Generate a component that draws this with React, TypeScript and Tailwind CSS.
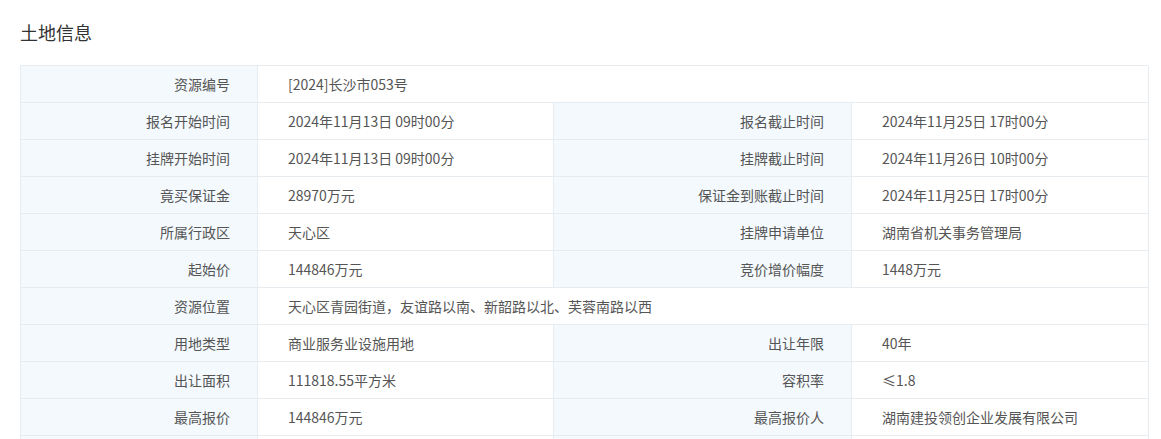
type Row = { l1: string; v1: string; l2?: string; v2?: string };

const rows: Row[] = [
  { l1: "资源编号", v1: "[2024]长沙市053号" },
  { l1: "报名开始时间", v1: "2024年11月13日 09时00分", l2: "报名截止时间", v2: "2024年11月25日 17时00分" },
  { l1: "挂牌开始时间", v1: "2024年11月13日 09时00分", l2: "挂牌截止时间", v2: "2024年11月26日 10时00分" },
  { l1: "竟买保证金", v1: "28970万元", l2: "保证金到账截止时间", v2: "2024年11月25日 17时00分" },
  { l1: "所属行政区", v1: "天心区", l2: "挂牌申请单位", v2: "湖南省机关事务管理局" },
  { l1: "起始价", v1: "144846万元", l2: "竞价增价幅度", v2: "1448万元" },
  { l1: "资源位置", v1: "天心区青园街道，友谊路以南、新韶路以北、芙蓉南路以西" },
  { l1: "用地类型", v1: "商业服务业设施用地", l2: "出让年限", v2: "40年" },
  { l1: "出让面积", v1: "111818.55平方米", l2: "容积率", v2: "≤1.8" },
  { l1: "最高报价", v1: "144846万元", l2: "最高报价人", v2: "湖南建投领创企业发展有限公司" },
  { l1: "", v1: "", l2: "", v2: "" },
];

const label = "flex h-[37px] items-center justify-end border-r border-b border-[#e6ecf0] bg-[#f3f9fd] pr-[27px]";
const value = "flex h-[37px] items-center border-r border-b border-[#e6ecf0] bg-white pl-[30px]";

export default function App() {
  return (
    <div
      className="h-[439px] w-[1161px] overflow-hidden bg-white px-5 pt-5 text-[14px] text-[#555]"
      style={{ fontFamily: '"Microsoft YaHei", "Noto Sans CJK SC", sans-serif' }}
    >
      <h2 className="h-6 text-[18px] leading-6 text-[#333]">土地信息</h2>
      <div className="mt-[21px] grid w-[1128px] grid-cols-[237px_296px_298px_297px] border-t border-l border-[#e6ecf0]">
        {rows.map((r, i) =>
          r.l2 === undefined ? (
            <div key={i} className="contents">
              <div className={label}>{r.l1}</div>
              <div className={`${value} col-span-3`}>{r.v1}</div>
            </div>
          ) : (
            <div key={i} className="contents">
              <div className={label}>{r.l1}</div>
              <div className={value}>{r.v1}</div>
              <div className={label}>{r.l2}</div>
              <div className={value}>{r.v2}</div>
            </div>
          )
        )}
      </div>
    </div>
  );
}
